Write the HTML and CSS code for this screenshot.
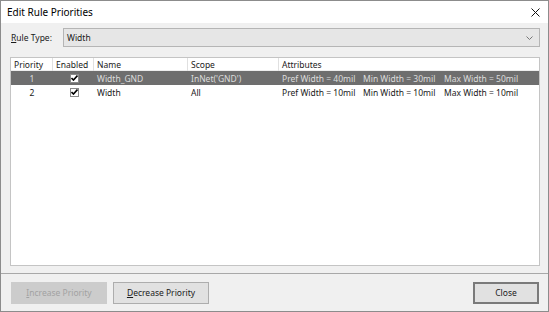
FILE: index.html
```html
<!DOCTYPE html>
<html>
<head>
<meta charset="utf-8">
<link rel="stylesheet" href="styles.css">
</head>
<body>
<div class="window">
  <div class="titlebar">
    <span class="title">Edit Rule Priorities</span>
    <svg class="close-x" width="9" height="9" viewBox="0 0 9 9"><path d="M0.5 0.5 L8.5 8.5 M8.5 0.5 L0.5 8.5" stroke="#111" stroke-width="1" fill="none"/></svg>
  </div>
  <div class="content">
    <div class="ruletype">
      <span class="label"><u>R</u>ule Type:</span>
      <div class="combo">
        <span>Width</span>
        <svg class="chev" width="7" height="4" viewBox="0 0 7 4"><path d="M0.5 0.5 L3.5 3.5 L6.5 0.5" stroke="#777" stroke-width="1" fill="none"/></svg>
      </div>
    </div>
    <div class="list">
      <div class="row header">
        <div class="cell">Priority</div>
        <div class="cell">Enabled</div>
        <div class="cell">Name</div>
        <div class="cell">Scope</div>
        <div class="cell">Attributes</div>
      </div>
      <div class="row selected">
        <div class="cell center">1</div>
        <div class="cell center"><span class="check"><svg width="7" height="6" viewBox="0 0 7 6"><path d="M0.5 3 L2.5 5 L6.5 0.5" stroke="#000" stroke-width="1.6" fill="none"/></svg></span></div>
        <div class="cell">Width_GND</div>
        <div class="cell">InNet('GND')</div>
        <div class="cell attrs"><span>Pref Width = 40mil</span><span>Min Width = 30mil</span><span>Max Width = 50mil</span></div>
      </div>
      <div class="row">
        <div class="cell center">2</div>
        <div class="cell center"><span class="check"><svg width="7" height="6" viewBox="0 0 7 6"><path d="M0.5 3 L2.5 5 L6.5 0.5" stroke="#000" stroke-width="1.6" fill="none"/></svg></span></div>
        <div class="cell">Width</div>
        <div class="cell">All</div>
        <div class="cell attrs"><span>Pref Width = 10mil</span><span>Min Width = 10mil</span><span>Max Width = 10mil</span></div>
      </div>
    </div>
  </div>
  <div class="footer">
    <div class="btn disabled"><u>I</u>ncrease Priority</div>
    <div class="btn"><u>D</u>ecrease Priority</div>
    <div class="spacer"></div>
    <div class="btn default">Close</div>
  </div>
</div>
</body>
</html>
```
FILE: styles.css
```css
* { box-sizing: border-box; }
html, body { margin: 0; padding: 0; background: #fff; }
body { font-family: "Noto Sans", "Open Sans", sans-serif; color: #1a1a1a; }
.window {
  width: 549px; height: 312px;
  border: 1px solid #8c8c8c;
  display: flex; flex-direction: column;
  background: #f0f0f0;
}
.titlebar {
  height: 22px; background: #fff;
  display: flex; align-items: center;
  padding: 0 8px 0 6px;
}
.title { font-size: 10px; color: #000; flex: 1; }
.close-x { margin-top: 0; }
.content {
  flex: 1;
  padding: 5px 8px 0 9px;
  display: flex; flex-direction: column;
}
.ruletype { display: flex; align-items: center; height: 19px; }
.label { font-size: 8.5px; width: 53px; padding-left: 1px; }
.combo {
  flex: 1; height: 19px;
  background: #e6e6e6; border: 1px solid #b5b5b5;
  display: flex; align-items: center; justify-content: space-between;
  padding: 0 6px 0 3px; font-size: 8.5px;
}
.chev { margin-top: 1px; }
.list {
  margin-top: 10px;
  height: 209px;
  background: #fff;
  border: 1px solid #c4c4c4;
  font-size: 8.5px;
}
.row {
  display: grid;
  grid-template-columns: 42px 41px 94px 91px 1fr;
  height: 14px;
  align-items: center;
}
.header { height: 13px; border-bottom: 1px solid #ededed; }
.header .cell { border-right: 1px solid #e0e0e0; height: 13px; line-height: 13px; padding-left: 3px; }
.header .cell:last-child { border-right: none; }
.cell { padding-left: 3px; white-space: nowrap; overflow: hidden; }
.center { text-align: center; padding-left: 0; display: flex; justify-content: center; }
.row .cell.center:nth-child(2) { padding-left: 2px; }
.selected { background: #6e6e6e; color: #dcdcdc; }
.check {
  width: 9px; height: 9px; background: #fff; border: 1px solid #8a8a8a;
  display: flex; align-items: center; justify-content: center;
}
.attrs { display: flex; }
.attrs span { width: 81px; }
.footer {
  height: 38px;
  border-top: 1px solid #a8a8a8;
  margin-top: 6px;
  display: flex; align-items: center;
  padding: 0 9px 0 10px; gap: 6px;
}
.spacer { flex: 1; }
.btn {
  width: 96px; height: 22px;
  background: #e1e1e1; border: 1px solid #adadad;
  font-size: 8.5px; color: #1a1a1a;
  display: flex; align-items: center; justify-content: center;
}
.btn.disabled { background: #cccccc; border-color: #cccccc; color: #a2a2a2; }
.btn.default { width: 66px; border: 2px solid #7a7a7a; }
```
